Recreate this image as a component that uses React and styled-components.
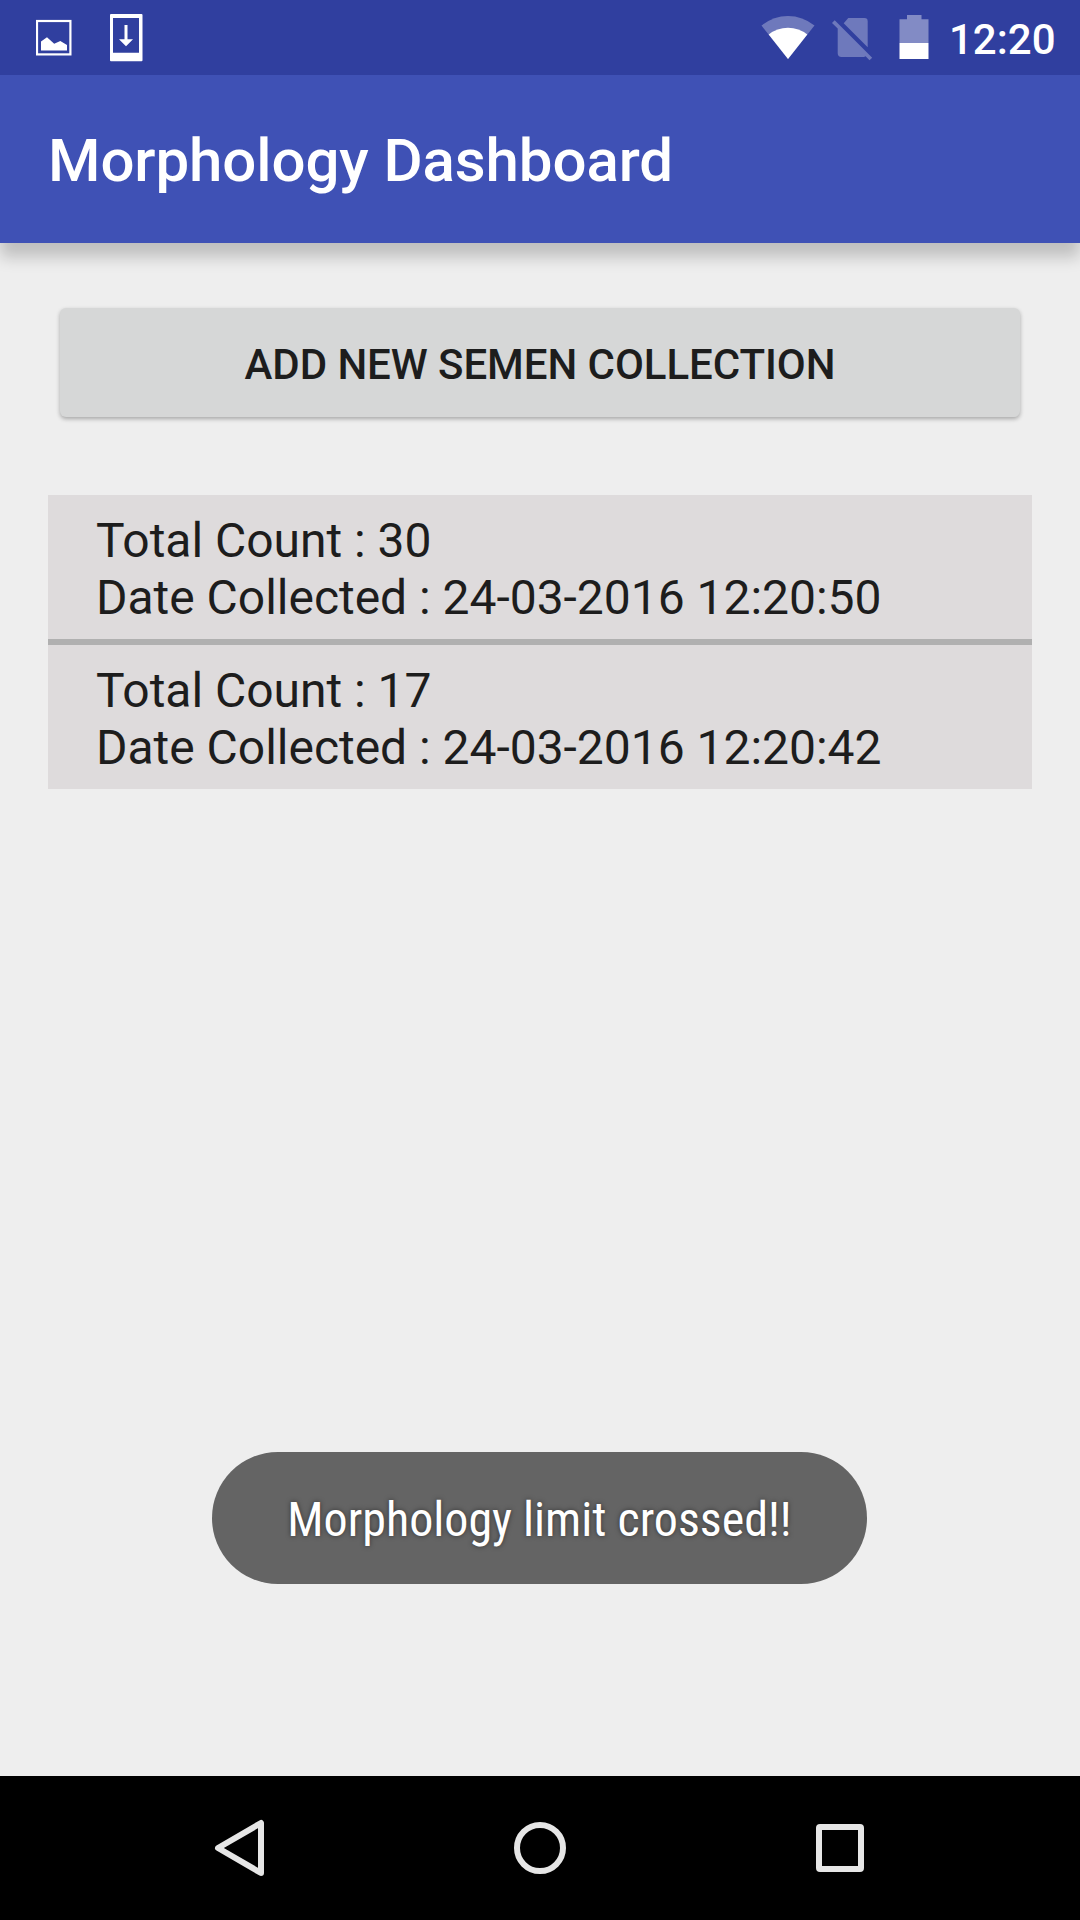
import React from "react";
import styled, { createGlobalStyle } from "styled-components";

const GlobalStyle = createGlobalStyle`
  * { box-sizing: border-box; }
  body { margin: 0; background: #eeeeee; }
`;

const Screen = styled.div`
  width: 1080px;
  height: 1920px;
  display: flex;
  flex-direction: column;
  background: #eeeeee;
  font-family: Roboto, "Noto Sans", sans-serif;
  overflow: hidden;
`;

const StatusBar = styled.header`
  position: relative;
  z-index: 1;
  height: 75px;
  flex: none;
  display: flex;
  align-items: center;
  justify-content: space-between;
  padding: 0 26px 0 36px;
  background: #303f9f;
`;

const Notifications = styled.div`
  display: flex;
  gap: 38px;
`;

const SystemIcons = styled.div`
  display: flex;
  align-items: center;
`;

const Icon = styled.svg`
  display: block;
  flex: none;
  margin-right: ${(p) => p.$after || 0}px;
`;

const Clock = styled.time`
  width: 105px;
  text-align: right;
  white-space: nowrap;
  color: #fff;
  font-size: 42px;
  font-weight: 500;
  line-height: 50px;
  padding-top: 5px;
`;

const AppBar = styled.div`
  height: 168px;
  flex: none;
  display: flex;
  align-items: center;
  padding: 0 48px;
  background: #3f51b5;
  box-shadow: 0 14px 15px rgba(0, 0, 0, 0.2);
`;

const Title = styled.h1`
  margin: 0;
  color: #fff;
  font-size: 60px;
  font-weight: 500;
  line-height: 70px;
  letter-spacing: -0.09px;
  padding-top: 4px;
`;

const Content = styled.main`
  flex: 1;
  display: flex;
  flex-direction: column;
  padding: 65px 48px 192px;
`;

const AddButton = styled.button`
  height: 109px;
  margin: 0 12px;
  padding: 5px 0 0;
  border: 0;
  border-radius: 6px;
  background: #d6d7d7;
  color: #1d1d1d;
  font: 500 42px/50px Roboto, sans-serif;
  letter-spacing: -0.06px;
  box-shadow: 0 2px 4px rgba(0, 0, 0, 0.3);
`;

const List = styled.ul`
  list-style: none;
  margin: 78px 0 0;
  padding: 0;
  display: flex;
  flex-direction: column;
  gap: 6px;
  background: #b0b0b0;
`;

const Row = styled.li`
  height: 144px;
  padding: 17px 48px 13px;
  background: #dedbdc;
`;

const Line = styled.p`
  margin: 0;
  color: #1d1d1d;
  font-size: 48px;
  line-height: 57px;
  letter-spacing: -0.02px;
  white-space: nowrap;
`;

const Toast = styled.div`
  align-self: center;
  width: 655px;
  height: 132px;
  margin: auto 1px 0 0;
  padding-top: 2px;
  display: flex;
  align-items: center;
  justify-content: center;
  border-radius: 66px;
  background: #646464;
  color: #fff;
`;

const ToastText = styled.span`
  font-family: "Roboto Condensed", Roboto, sans-serif;
  font-stretch: condensed;
  font-size: 48px;
  line-height: 57px;
  white-space: nowrap;
  text-shadow: 0 0 5px rgba(0, 0, 0, 0.5);
`;

const NavBar = styled.nav`
  height: 144px;
  flex: none;
  display: flex;
  align-items: center;
  justify-content: center;
  gap: 156px;
  background: #000;
`;

const NavButton = styled.button`
  width: 144px;
  height: 144px;
  padding: 0;
  border: 0;
  background: none;
`;

const COLLECTIONS = [
  { total: 30, date: "24-03-2016 12:20:50" },
  { total: 17, date: "24-03-2016 12:20:42" },
];

const PictureIcon = () => (
  <Icon width="36" height="75" viewBox="36 0 36 75">
    <rect x="37" y="21" width="33.400" height="33.400" fill="none" stroke="#fff" strokeWidth="2.2" />
    <path d="M41 50.5V41.5L47 37.2L54.2 43.7L60.3 41L67 45V50.5Z" fill="#fff" />
  </Icon>
);

const DownloadIcon = () => (
  <Icon width="33" height="75" viewBox="110 0 33 75">
    <path
      d="M111 14H141.500Q142.500 14 142.500 15V60.200Q142.500 61.200 141.500 61.200H111Q110 61.200 110 60.200V15Q110 14 111 14ZM113 18V52.700H139V18Z"
      fill="#fff"
      fillRule="evenodd"
    />
    <path d="M124.500 25H127.500V39.300H133L126 46.300L119 39.300H124.500Z" fill="#fff" />
  </Icon>
);

const WifiIcon = () => (
  <Icon $after={16.5} width="54" height="75" viewBox="760.500 0 54 75">
    <path d="M787.500 59L761 25.500Q773 16 787.500 16T814 25.500Z" fill="#fff" fillOpacity="0.3" />
    <path d="M787.500 59L768.200 34.500Q776.500 27.700 787.500 27.700T806.800 34.500Z" fill="#fff" />
  </Icon>
);

const NoSimIcon = () => (
  <Icon $after={25.5} width="42" height="75" viewBox="831 0 42 75">
    <g fill="#fff" fillOpacity="0.3">
      <path d="M843.700 23.300L848.300 18H864.500Q867.700 18 867.700 21.300V47.300Z" />
      <path d="M832 23L834.700 20.200L872.200 57.700L869.500 60.200L865.600 56.300Q864.800 57 863.500 57H841.500Q837.700 57 837.700 53.300V28.500Z" />
    </g>
  </Icon>
);

const BatteryIcon = () => (
  <Icon $after={20.5} width="30" height="75" viewBox="898.500 0 30 75">
    <path d="M899 19.300H906.500V15H921V19.300H928V43H899Z" fill="#fff" fillOpacity="0.4" />
    <path d="M899 43H928V59H899Z" fill="#fff" />
  </Icon>
);

export default function App() {
  return (
    <>
      <GlobalStyle />
      <Screen>
        <StatusBar>
          <Notifications>
            <PictureIcon />
            <DownloadIcon />
          </Notifications>
          <SystemIcons>
            <WifiIcon />
            <NoSimIcon />
            <BatteryIcon />
            <Clock>12:20</Clock>
          </SystemIcons>
        </StatusBar>
        <AppBar>
          <Title>Morphology Dashboard</Title>
        </AppBar>
        <Content>
          <AddButton>ADD NEW SEMEN COLLECTION</AddButton>
          <List>
            {COLLECTIONS.map((c) => (
              <Row key={c.date}>
                <Line>Total Count : {c.total}</Line>
                <Line>Date Collected : {c.date}</Line>
              </Row>
            ))}
          </List>
          <Toast role="status">
            <ToastText>Morphology limit crossed!!</ToastText>
          </Toast>
        </Content>
        <NavBar>
          <NavButton aria-label="Back">
            <Icon width="144" height="144" viewBox="168 1776 144 144">
              <path d="M218 1848L261 1823V1873Z" fill="none" stroke="#e6e6e6" strokeWidth="6" strokeLinejoin="round" />
            </Icon>
          </NavButton>
          <NavButton aria-label="Home">
            <Icon width="144" height="144" viewBox="0 0 144 144">
              <circle cx="72" cy="72" r="23" fill="none" stroke="#e6e6e6" strokeWidth="6" />
            </Icon>
          </NavButton>
          <NavButton aria-label="Recents">
            <Icon width="144" height="144" viewBox="0 0 144 144">
              <rect x="51" y="51" width="42" height="42" rx="1" fill="none" stroke="#e6e6e6" strokeWidth="6" />
            </Icon>
          </NavButton>
        </NavBar>
      </Screen>
    </>
  );
}
